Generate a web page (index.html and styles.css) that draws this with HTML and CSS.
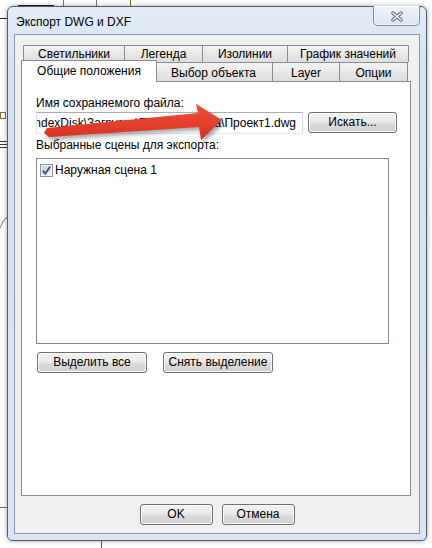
FILE: index.html
```html
<!DOCTYPE html>
<html lang="ru">
<head>
<meta charset="utf-8">
<title>Экспорт DWG и DXF</title>
<link rel="stylesheet" href="styles.css">
</head>
<body>
<svg class="backdrop" width="432" height="548" viewBox="0 0 432 548">
  <line x1="18" y1="5.5" x2="54" y2="5.5" stroke="#222" stroke-width="1"/>
  <line x1="63.5" y1="0" x2="63.5" y2="6" stroke="#777" stroke-width="1"/>
  <line x1="96.5" y1="0" x2="96.5" y2="6" stroke="#777" stroke-width="1"/>
  <line x1="130.5" y1="0" x2="130.5" y2="6" stroke="#8b6b3a" stroke-width="1"/>
  <line x1="0" y1="18.5" x2="7" y2="18.5" stroke="#222" stroke-width="1"/>
  <rect x="0.5" y="112.5" width="5" height="6" fill="none" stroke="#8b6b3a"/>
  <line x1="0" y1="141.5" x2="7" y2="141.5" stroke="#333"/>
  <line x1="0" y1="144.5" x2="7" y2="144.5" stroke="#333"/>
  <line x1="0" y1="147.5" x2="7" y2="147.5" stroke="#333"/>
  <path d="M0 228 Q3 220 7 217" fill="none" stroke="#8b6b3a"/>
  <line x1="0" y1="507.5" x2="7" y2="507.5" stroke="#666"/>
  <line x1="101.5" y1="541" x2="101.5" y2="548" stroke="#6b5230"/>
</svg>

<div class="window">
  <div class="titlebar">
    <span class="title">Экспорт DWG и DXF</span>
    <div class="close">
      <svg width="14" height="11" viewBox="0 0 14 11">
        <path d="M3 2 L11 9 M11 2 L3 9" stroke="#5a6270" stroke-width="3.4" stroke-linecap="round"/>
        <path d="M3 2 L11 9 M11 2 L3 9" stroke="#f4f6f9" stroke-width="1.6" stroke-linecap="round"/>
      </svg>
    </div>
  </div>

  <div class="client">
    <div class="tabs">
      <div class="tabrow back">
        <div class="tab w-svet">Светильники</div>
        <div class="tab w-leg">Легенда</div>
        <div class="tab w-izo">Изолинии</div>
        <div class="tab w-graf">График значений</div>
      </div>
      <div class="tabrow front">
        <div class="tab selected w-gen">Общие положения</div>
        <div class="tab w-vyb">Выбор объекта</div>
        <div class="tab w-layer">Layer</div>
        <div class="tab w-opt">Опции</div>
      </div>
    </div>

    <div class="panel">
      <div class="label">Имя сохраняемого файла:</div>
      <div class="filerow">
        <div class="field"><span class="path">C:\Users\User\YandexDisk\Загрузки\Проект\Работа\Проект1.dwg</span></div>
        <button class="btn browse">Искать...</button>
      </div>
      <div class="label second">Выбранные сцены для экспорта:</div>
      <div class="listbox">
        <div class="item">
          <svg class="cb" width="13" height="13" viewBox="0 0 13 13">
            <defs>
              <linearGradient id="cbg" x1="0" y1="0" x2="1" y2="1">
                <stop offset="0" stop-color="#cbcfd5"/>
                <stop offset="1" stop-color="#f6f6f6"/>
              </linearGradient>
            </defs>
            <rect x="0.5" y="0.5" width="12" height="12" fill="#f5f5f5" stroke="#8e8f8f"/>
            <rect x="2" y="2" width="9" height="9" fill="url(#cbg)"/>
            <path d="M2.8 6.6 L5.2 9.6 L10.2 2.6" fill="none" stroke="#3d5a96" stroke-width="1.9"/>
          </svg>
          <span>Наружная сцена 1</span>
        </div>
      </div>
      <div class="selrow">
        <button class="btn sel">Выделить все</button>
        <button class="btn sel">Снять выделение</button>
      </div>
    </div>

    <div class="dlgbtns">
      <button class="btn dlg">OK</button>
      <button class="btn dlg">Отмена</button>
    </div>
  </div>
</div>

<svg class="arrow" width="432" height="548" viewBox="0 0 432 548">
  <defs>
    <linearGradient id="ag" x1="0" y1="0" x2="0" y2="1">
      <stop offset="0" stop-color="#f0503c"/>
      <stop offset="1" stop-color="#d8301f"/>
    </linearGradient>
    <filter id="sh" x="-20%" y="-50%" width="140%" height="200%">
      <feGaussianBlur stdDeviation="2"/>
    </filter>
  </defs>
  <path d="M44 133 L47 128 L198 113 L196 104 L222 120 L201 140 L199 127 L49 137 Z" fill="#000" opacity="0.35" filter="url(#sh)" transform="translate(2 3)"/>
  <path d="M44 133 L47 128 L198 113 L196 104 L222 120 L201 140 L199 127 L49 137 Z" fill="url(#ag)"/>
</svg>
</body>
</html>
```

FILE: styles.css
```css
* { box-sizing: border-box; }

html, body {
  margin: 0;
  padding: 0;
  background: #ffffff;
}

body {
  width: 432px;
  height: 548px;
  overflow: hidden;
  position: relative;
  font-family: "Liberation Sans", Arial, sans-serif;
  font-size: 12px;
  color: #000;
  padding: 6px 0 0 7px;
}

.backdrop {
  position: absolute;
  left: 0;
  top: 0;
}

.arrow {
  position: absolute;
  left: 0;
  top: 0;
  pointer-events: none;
}

.window {
  position: relative;
  width: 420px;
  height: 535px;
  border: 1px solid #4f5d70;
  border-radius: 6px 6px 5px 5px;
  background: linear-gradient(#e3ebf6, #d6e3f4 60px, #d9e5f5);
  box-shadow: 0 0 5px rgba(0, 0, 0, 0.35);
  display: flex;
  flex-direction: column;
}

.titlebar {
  height: 27px;
  display: flex;
  justify-content: space-between;
  align-items: flex-start;
  padding: 0 6px 0 8px;
}

.title {
  margin-top: 8px;
  line-height: 14px;
  color: #000;
}

.close {
  width: 47px;
  height: 20px;
  margin-top: -1px;
  border: 1px solid #7d8aa0;
  border-top: none;
  border-radius: 0 0 5px 5px;
  background: linear-gradient(#eef3fa, #dbe5f2);
  box-shadow: inset 0 0 0 1px rgba(255, 255, 255, 0.6);
  display: flex;
  justify-content: center;
  align-items: center;
  padding-top: 1px;
}

.client {
  flex: 1;
  margin: 0 6px 6px 6px;
  border: 1px solid #8e9aab;
  background: #f0f0f0;
  padding: 10px 8px 0 6px;
  display: flex;
  flex-direction: column;
}

.tabs {
  display: flex;
  flex-direction: column;
}

.tabrow {
  display: flex;
  padding-left: 2px;
}

.tab {
  border: 1px solid #898c95;
  border-bottom: none;
  margin-left: -1px;
  text-align: center;
  white-space: nowrap;
  background: linear-gradient(#f4f4f4, #e6e6e6 55%, #dedede);
}

.tab:first-child {
  margin-left: 0;
}

.back .tab {
  height: 17px;
  line-height: 16px;
}

.front .tab {
  height: 19px;
  line-height: 14px;
  padding-top: 3px;
}

.front .tab.selected {
  position: relative;
  z-index: 3;
  height: 22px;
  margin: -2px -2px -1px -2px;
  background: #ffffff;
}

.w-svet { width: 102px; }
.w-leg { width: 79px; }
.w-izo { width: 86px; }
.w-graf { width: 122px; }

.w-gen { width: 136px; }
.w-vyb { width: 119px; }
.w-layer { width: 68px; }
.w-opt { width: 69px; }

.panel {
  height: 415px;
  border: 1px solid #898c95;
  background: #ffffff;
  padding: 14px 12px 0 14px;
  display: flex;
  flex-direction: column;
}

.label {
  line-height: 14px;
  color: #000;
}

.label.second {
  margin-top: 4px;
}

.filerow {
  display: flex;
  align-items: flex-start;
  gap: 5px;
  margin-top: 2px;
}

.field {
  width: 267px;
  height: 22px;
  border: 1px solid;
  border-color: #abadb3 #dbdfe6 #e3e9ef #e2e3ea;
  background: #fff;
  display: flex;
  justify-content: flex-end;
  align-items: center;
  overflow: hidden;
  padding-right: 6px;
  white-space: nowrap;
}

.path {
  flex: none;
  line-height: 14px;
}

.btn {
  font-family: inherit;
  font-size: 12px;
  color: #000;
  height: 21px;
  padding: 0;
  border: 1px solid #707070;
  border-radius: 3px;
  background: linear-gradient(#f2f2f2 0%, #ebebeb 48%, #dddddd 52%, #cfcfcf 100%);
  box-shadow: inset 0 0 0 1px #fbfbfb;
  line-height: 17px;
}

.browse {
  width: 89px;
}

.listbox {
  width: 353px;
  height: 186px;
  margin-top: 6px;
  border: 1px solid #828790;
  background: #fff;
  padding: 4px 0 0 3px;
}

.item {
  display: flex;
  align-items: center;
  gap: 2px;
  line-height: 14px;
}

.cb {
  flex: none;
  display: block;
}

.selrow {
  display: flex;
  gap: 16px;
  margin-top: 8px;
  padding-left: 1px;
}

.sel {
  width: 110px;
}

.dlgbtns {
  display: flex;
  justify-content: center;
  gap: 9px;
  margin-top: 8px;
  padding-left: 2px;
}

.dlg {
  width: 73px;
}
```
